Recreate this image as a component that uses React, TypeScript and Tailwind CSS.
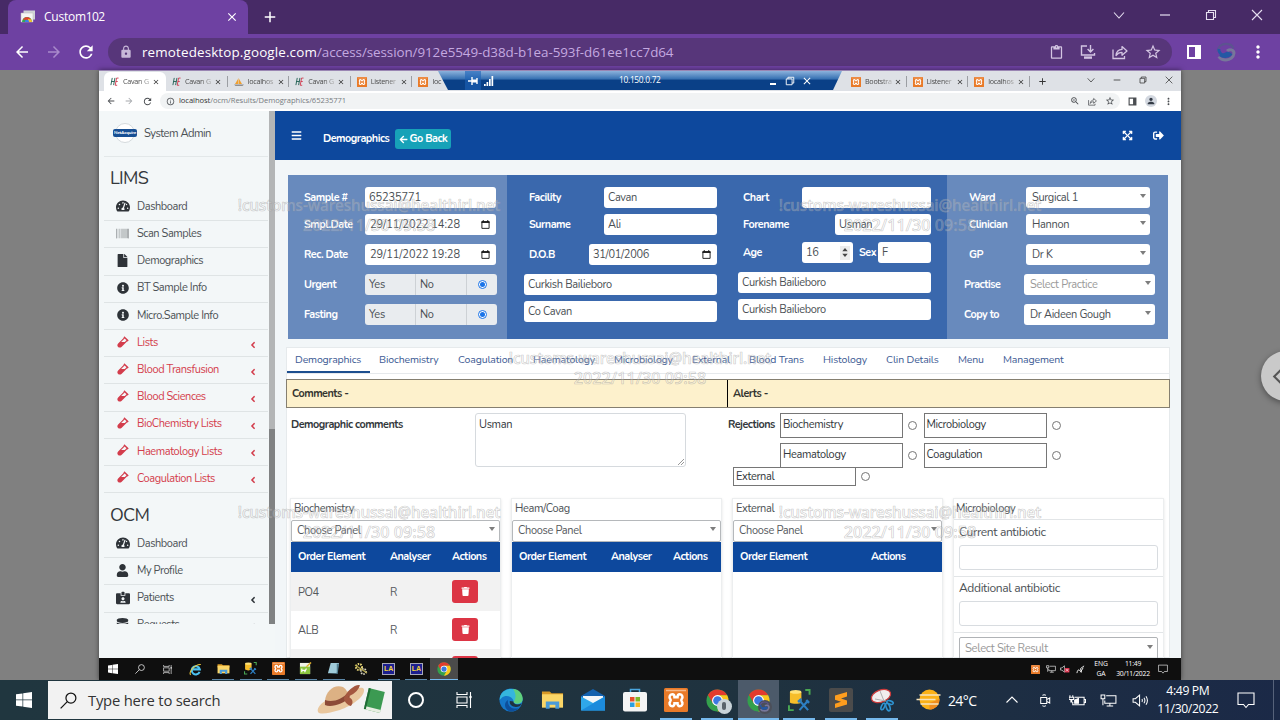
import React from "react";
import {
  FaTachometerAlt, FaBarcode, FaFile, FaInfoCircle, FaVial, FaAngleLeft, FaUser, FaIdCardAlt,
  FaDatabase, FaBars, FaArrowLeft, FaExpandArrowsAlt, FaSignOutAlt, FaTrash,
} from "react-icons/fa";
import {
  MdArrowBack, MdArrowForward, MdRefresh, MdLock, MdClose, MdAdd, MdStarBorder, MdOutlineContentPaste,
  MdOutlineInfo, MdZoomIn, MdMoreVert, MdPerson,
} from "react-icons/md";

type Cls = { className?: string };

/* ---------- drawings ---------- */

const Share = ({ className = "" }: Cls) => (
  <svg viewBox="0 0 16 16" className={className} fill="none" stroke="currentColor" strokeWidth="1.3">
    <path d="M1 5.5V14.5H12.5V12" />
    <path d="M4 11.5C4.4 7.5 6.5 5.6 10 5.4V2.6L15 7L10 11.2V8.4C7.4 8.4 5.6 9.3 4 11.5Z" strokeLinejoin="round" />
  </svg>
);

const Install = ({ className = "" }: Cls) => (
  <svg viewBox="0 0 16 16" className={className} fill="none" stroke="currentColor" strokeWidth="1.4">
    <path d="M7 2H1.5V11H14.5V9" />
    <path d="M10.5 1V7.5M7.6 5L10.5 8L13.4 5" />
    <path d="M4 13.6H12" strokeWidth="2.4" />
  </svg>
);

const SidePanel = ({ className = "" }: Cls) => (
  <svg viewBox="0 0 16 16" className={className} fill="currentColor">
    <path d="M1 1H15V15H1ZM3 3V13H9V3Z" fillRule="evenodd" />
  </svg>
);

const Restore = ({ className = "" }: Cls) => (
  <svg viewBox="0 0 12 12" className={className} fill="none" stroke="currentColor" strokeWidth="1.1">
    <path d="M1.5 3.5H8.5V10.5H1.5ZM3.5 3.5V1.5H10.5V8.5H8.5" />
  </svg>
);

const Cross = ({ className = "" }: Cls) => (
  <svg viewBox="0 0 12 12" className={className} fill="none" stroke="currentColor" strokeWidth="1.1">
    <path d="M1 1L11 11M11 1L1 11" />
  </svg>
);

const ChevronDown = ({ className = "" }: Cls) => (
  <svg viewBox="0 0 12 12" className={className} fill="none" stroke="currentColor" strokeWidth="1.1">
    <path d="M1 3.5L6 9L11 3.5" />
  </svg>
);

const Dash = ({ className = "" }: Cls) => (
  <svg viewBox="0 0 12 12" className={className} fill="none" stroke="currentColor" strokeWidth="1.2">
    <path d="M1 6H11" />
  </svg>
);

const RemoteDesktopLogo = ({ className = "" }: Cls) => (
  <svg viewBox="0 0 16 16" className={className}>
    <path d="M3.5 1.5H15V10.5H3.5Z" fill="#cfd2d6" />
    <path d="M1 4H13V13H1Z" fill="#f4f4f4" stroke="#b8b8b8" strokeWidth=".5" />
    <path d="M2 13A5 5 0 0 1 12 13Z" fill="#34a853" />
    <path d="M2.6 10.6A5 5 0 0 1 11.4 10.6L7 11Z" fill="#e2432f" />
    <path d="M8 10L11.4 10.6L12 13H8Z" fill="#f7c22b" />
    <path d="M4.8 13A2.2 2.2 0 0 1 9.2 13Z" fill="#3b7ded" />
  </svg>
);

const SwirlLogo = ({ className = "" }: Cls) => (
  <svg viewBox="0 0 20 20" className={className} fill="none">
    <path d="M1.800 9.500C1.800 4.500 6 1.800 10 1.800C13.500 1.800 16.500 3.800 17.500 6.500" stroke="#5c5390" strokeWidth="2.200" />
    <path d="M11 9C13.500 6.500 18 8 18 11C17.500 15.500 14 18 10 18C6.500 18 4 16.500 2.800 14.500" stroke="#77779a" strokeWidth="3" />
    <path d="M3 7C2.500 11.500 6.500 13.800 9.500 12C11.500 10.800 13 11 14.500 12.500C12 15 7 15.500 4 13" stroke="#2458a4" strokeWidth="2.800" />
  </svg>
);

const HseLogo = () => (
  <svg viewBox="0 0 10 10" className="size-[9px] shrink-0" fill="none">
    <path d="M2.500 1L1 9M5.500 1L4 9M1.500 5H5" stroke="#1d5e50" strokeWidth="1" />
    <path d="M9.500 1.200H7.300L5.800 9.200H8M6.500 5H8.600" stroke="#d0384d" strokeWidth="1" />
  </svg>
);

const XamppLogo = ({ className = "" }: Cls) => (
  <svg viewBox="0 0 24 24" className={className}>
    <rect width="24" height="24" rx="1.5" fill="#e97a28" />
    <path d="M2 2.500H22" stroke="#f6b98a" strokeWidth="1.500" />
    <path
      d="M8.200 6.300C5.500 6.300 4.800 9.500 6.300 11C7 11.800 7 12.700 6.300 13.500C4.800 15 5.500 18.200 8.200 18.200C10 18.200 10.500 17 10.500 15.300H13.500C13.500 17 14 18.200 15.800 18.200C18.500 18.200 19.200 15 17.700 13.500C17 12.700 17 11.800 17.700 11C19.200 9.500 18.500 6.300 15.800 6.300C14 6.300 13.500 7.500 13.500 9.200H10.500C10.500 7.500 10 6.300 8.200 6.300Z"
      fill="none" stroke="#fff" strokeWidth="2.500"
    />
  </svg>
);

const SailLogo = () => (
  <svg viewBox="0 0 10 8" className="h-[8px] w-[10px] shrink-0">
    <path d="M1 6L4 1V6ZM4.500 6V0L8 6Z" fill="#f0a030" />
    <path d="M0 6.500H10L8.500 8H1.500Z" fill="#8f8f8f" />
  </svg>
);

const Chrome = ({ className = "" }: Cls) => (
  <svg viewBox="0 0 24 24" className={className}>
    <circle cx="12" cy="12" r="11.500" fill="#34a04c" />
    <path d="M12 6.500H22.100A11.500 11.500 0 0 0 2.040 6.250L7.200 14.800Z" fill="#e33b2e" />
    <path d="M16.700 14.800L12 23.500A11.500 11.500 0 0 0 22.100 6.500H12Z" fill="#fbc71c" />
    <circle cx="12" cy="12" r="5.700" fill="#fff" />
    <circle cx="12" cy="12" r="4.500" fill="#3b78e0" />
  </svg>
);

const Windows = ({ className = "" }: Cls) => (
  <svg viewBox="0 0 16 16" className={className} fill="currentColor">
    <path d="M0 2.300L6.500 1.400V7.600H0ZM7.200 1.300L16 0V7.600H7.200ZM0 8.300H6.500V14.600L0 13.700ZM7.200 8.300H16V16L7.200 14.700Z" />
  </svg>
);

const Magnifier = ({ className = "" }: Cls) => (
  <svg viewBox="0 0 16 16" className={className} fill="none" stroke="currentColor" strokeWidth="1.150">
    <circle cx="10.300" cy="5.700" r="4.700" />
    <path d="M6.900 9.100L.6 15.400" />
  </svg>
);

const TaskView = ({ className = "" }: Cls) => (
  <svg viewBox="0 0 16 16" className={className} fill="none" stroke="currentColor" strokeWidth="1.100">
    <path d="M1 0V2.500H11V0M1 16V13.500H11V16M1 5H11V11H1ZM14.500 0V16" />
    <path d="M13.400 5H15.600" strokeWidth="2.200" />
  </svg>
);

const Folder = ({ className = "" }: Cls) => (
  <svg viewBox="0 0 24 22" className={className}>
    <path d="M1 2H9L11 4H23V8H1Z" fill="#d99a26" />
    <path d="M1 5H23V19H1Z" fill="#fbd667" />
    <path d="M5 20V12.500H19V20H15V16H9V20Z" fill="#4a9bd8" />
  </svg>
);

const DbTools = ({ className = "" }: Cls) => (
  <svg viewBox="0 0 24 24" className={className} fill="none">
    <path d="M2 3V14C5 16 11 16 14 14V3Z" fill="#f6bd2a" />
    <ellipse cx="8" cy="3" rx="6" ry="2" fill="#ffe27a" />
    <path d="M18 1H22.500V6M1 17V22H6" stroke="#4aa853" strokeWidth="2" />
    <path d="M12 12L21 22M21 12L12 22" stroke="#2d7fc4" strokeWidth="2.200" />
    <path d="M10.500 13.500L14 10.500M19 11.500L22 14.500" stroke="#2d7fc4" strokeWidth="2.600" />
  </svg>
);

const Edge = ({ className = "" }: Cls) => (
  <svg viewBox="0 0 24 24" className={className}>
    <circle cx="12" cy="12" r="11.500" fill="#1577c9" />
    <path d="M1 9C3 2 11-1 18 2.500C23 5.500 25 12 22 15C19 17 14.500 16 14.500 13.500C14.500 10 10 7 5 8.500C3 9 2 10.500 .6 12Z" fill="#35b6dd" />
    <path d="M14 1C21 1 25 8 23.300 13C21.500 17 14.500 16.200 14.500 13.500C17 11 17.500 6 14 1Z" fill="#5fd07d" />
    <path d="M9 12C8 18 13 22 20 20C17 23.500 12 24 9 22.500C5 20 5 14 9 12Z" fill="#0d4f9c" />
    <path d="M14.500 13.500C14 16 18 17.500 22.500 15.500L21 18C16 20.500 10 18 10.800 13Z" fill="#1f3340" />
  </svg>
);

const Explorer = ({ className = "" }: Cls) => (
  <svg viewBox="0 0 16 16" className={className} fill="none">
    <path d="M13 11A5 5 0 1 1 13.200 7.800H4.500" stroke="#4cc3f2" strokeWidth="2.600" />
    <path d="M2 14.500C-1 12 6 1.500 14.500 1.800" stroke="#f4cd3a" strokeWidth="1.300" />
  </svg>
);

const Mail = ({ className = "" }: Cls) => (
  <svg viewBox="0 0 24 22" className={className}>
    <path d="M0 7L12 0L24 7V10H0Z" fill="#1461ae" />
    <path d="M2 7H22V15H2Z" fill="#f3f6f8" />
    <path d="M0 7.500L12 14L24 7.500V21.500H0Z" fill="#2fa7ea" />
    <path d="M0 21.500L24 7.500V21.500Z" fill="#1c8bdc" />
  </svg>
);

const Store = ({ className = "" }: Cls) => (
  <svg viewBox="0 0 24 24" className={className}>
    <path d="M7.500 6V1.500H16.500V6" fill="none" stroke="#4aa7e0" strokeWidth="1.500" />
    <rect y="4" width="24" height="19.500" rx="2" fill="#f4f4f4" />
    <path d="M7 9H11.500V13.500H7Z" fill="#e8502c" />
    <path d="M12.500 9H17V13.500H12.500Z" fill="#7db928" />
    <path d="M7 14.500H11.500V19H7Z" fill="#2ba0e2" />
    <path d="M12.500 14.500H17V19H12.500Z" fill="#f8b820" />
  </svg>
);

const Sublime = ({ className = "" }: Cls) => (
  <svg viewBox="0 0 24 24" className={className}>
    <rect width="24" height="24" rx="2" fill="#4b4b4b" />
    <path d="M6 7.500L18 4V8.500L12 10.500L18 12.500V16.500L6 20V15.800L12 13.800L6 11.800Z" fill="#ff9d1e" />
  </svg>
);

const Snip = ({ className = "" }: Cls) => (
  <svg viewBox="0 0 24 24" className={className} fill="none">
    <ellipse cx="11" cy="8" rx="10" ry="6" transform="rotate(-20 11 8)" fill="#f1eded" stroke="#cc3b3b" strokeWidth="1.300" />
    <path d="M10 3L14 13M5 11L16 13" stroke="#b0b0b0" strokeWidth="1" />
    <ellipse cx="13" cy="18.500" rx="1.600" ry="3.500" transform="rotate(25 13 18.500)" stroke="#2f93d1" strokeWidth="1.600" />
    <ellipse cx="18" cy="19" rx="1.800" ry="4" transform="rotate(-20 18 19)" stroke="#2f93d1" strokeWidth="1.600" />
    <ellipse cx="20" cy="14.500" rx="1.700" ry="3.300" transform="rotate(-75 20 14.500)" stroke="#2f93d1" strokeWidth="1.600" />
  </svg>
);

const Notepad = ({ green = false }: { green?: boolean }) => (
  <svg viewBox="0 0 14 14" className="size-[13px]">
    {green ? (
      <>
        <path d="M1 1H12V13H1Z" fill="#f1f4e8" />
        <path d="M1 5H12V13H1Z" fill="#8cc63f" />
        <path d="M3 7V11M3 9H7M8 7L6 11" stroke="#fff" strokeWidth="1.300" />
        <path d="M8 5L13 .5" stroke="#e0b02c" strokeWidth="1.500" />
      </>
    ) : (
      <>
        <path d="M4 1H13L10.500 12H1Z" fill="#9fcbd9" />
        <path d="M10.500 2H13L11.500 13H3L10.500 12Z" fill="#4f7d90" />
      </>
    )}
  </svg>
);

const Gears = () => (
  <svg viewBox="0 0 14 14" className="size-[14px]" fill="none">
    <circle cx="5" cy="5" r="3" stroke="#e9d87a" strokeWidth="2" strokeDasharray="1.500 1" />
    <circle cx="9.500" cy="9.500" r="2.500" stroke="#d5d0bb" strokeWidth="1.800" strokeDasharray="1.500 1" />
    <path d="M1 3L13 11" stroke="#b7a94c" strokeWidth="1.200" />
  </svg>
);

const LabApp = () => (
  <span className="flex h-[12px] w-[13px] flex-col items-center border border-[#a8a8b8] bg-[#1c1f8e]">
    <span className="font-['Liberation_Sans',sans-serif] text-[7px] leading-[9px] font-bold text-[#f3d43b]">LA</span>
  </span>
);

const Monitor = ({ className = "" }: Cls) => (
  <svg viewBox="0 0 18 14" className={className} fill="none" stroke="currentColor" strokeWidth="1.100">
    <path d="M6.500 2H17V10H5V7M7 12.800H14M10.500 10V12.800" />
    <path d="M1 1H5V5H1ZM3 5V12" />
  </svg>
);

const Speaker = ({ className = "", muted = false }: Cls & { muted?: boolean }) => (
  <svg viewBox="0 0 18 14" className={className} fill="none" stroke="currentColor" strokeWidth="1.100">
    <path d="M1 5H3.500L8 1.200V12.800L3.500 9H1Z" />
    {muted ? (
      <>
        <rect x="8.500" y="5" width="8.500" height="8.500" rx="1" fill="#d9304a" stroke="none" />
        <path d="M10.500 7L15 11.500M15 7L10.500 11.500" stroke="#fff" />
      </>
    ) : (
      <path d="M10.500 5.500Q11.500 7 10.500 8.500M12.700 4Q14.800 7 12.700 10M14.900 2.400Q18 7 14.900 11.600" />
    )}
  </svg>
);

const Bubble = ({ className = "" }: Cls) => (
  <svg viewBox="0 0 18 18" className={className} fill="none" stroke="currentColor" strokeWidth="1.100">
    <path d="M1 2H17V13.500H11.500L9 16.500L6.500 13.500H1Z" />
  </svg>
);

const CalendarIcon = () => (
  <svg viewBox="0 0 10 10" className="mb-[2px] size-[9px] shrink-0" fill="none" stroke="#111">
    <path d="M1 2H9V9.300H1Z" strokeWidth="1" />
    <path d="M.5 2.300H9.500" strokeWidth="1.800" />
    <path d="M2.500 0V2M7.500 0V2" strokeWidth="1" />
  </svg>
);

const Caret = () => (
  <svg viewBox="0 0 6 4" className="mb-[5px] h-[4px] w-[6px] shrink-0">
    <path d="M0 0H6L3 4Z" fill="#7d7d7d" />
  </svg>
);

/* ---------- outer browser ---------- */

const OuterChrome = () => (
  <header className="shrink-0 font-['Segoe_UI','Open_Sans',sans-serif] text-white">
    <div className="flex h-[34px] items-center bg-[#472a66]">
      <div className="ml-2 flex h-full w-[240px] items-center rounded-t-lg bg-[#6e41a2] pr-[9px] pl-3">
        <RemoteDesktopLogo className="size-4" />
        <span className="ml-2 flex-1 text-[12px] tracking-[-0.600px]"><span className="tracking-[-0.250px]">Custom</span>102</span>
        <MdClose className="size-[14px]" />
      </div>
      <MdAdd className="ml-[13px] size-[18px]" />
      <div className="ml-auto flex items-center gap-[34px] pr-[17px] pb-[5px] text-[#e6dff0]">
        <ChevronDown className="size-3" />
        <Dash className="size-3" />
        <Restore className="size-3" />
        <Cross className="size-3" />
      </div>
    </div>
    <div className="flex h-[36px] items-center bg-[#6e41a2]">
      <MdArrowBack className="ml-[13px] size-[18px]" />
      <MdArrowForward className="ml-[14px] size-[18px] text-[#a98acb]" />
      <MdRefresh className="ml-[13px] size-[20px]" />
      <div className="ml-[12px] flex h-[28px] w-[1064px] items-center rounded-full bg-[#57367a] pr-[10px] pl-[11px]">
        <MdLock className="size-[14px] text-[#c7b8d8]" />
        <span className="ml-[9px] flex-1 text-[13.400px] text-[#c4a9e0]">
          <span className="tracking-[0.150px] text-white">remotedesktop.google.com</span><span className="tracking-[-0.070px]">/access/session/912e5549-d38d-b1ea-593f-d61ee1cc7d64</span>
        </span>
        <span className="flex items-center gap-4 text-[#d3c5e2]">
          <MdOutlineContentPaste className="size-[15px]" />
          <Install className="size-4" />
          <Share className="size-4" />
          <MdStarBorder className="size-[18px]" />
        </span>
      </div>
      <SidePanel className="ml-[14px] size-4" />
      <SwirlLogo className="ml-[14px] size-5" />
      <MdMoreVert className="ml-[12px] size-5" />
    </div>
  </header>
);

/* ---------- remote browser ---------- */

const TAB_ICONS = { hse: <HseLogo />, sail: <SailLogo />, xampp: <XamppLogo className="size-[10px] shrink-0" /> };

const RemoteTab = ({ icon, title, active = false, line = false }: { icon: keyof typeof TAB_ICONS; title: string; active?: boolean; line?: boolean }) => (
  <div className={active ? "flex h-[19px] w-[62px] items-center rounded-t-md bg-white pl-[6px]" : "flex h-[19px] w-[61.600px] items-center pl-[6px]"}>
    {TAB_ICONS[icon]}
    <span className="ml-[4px] w-[28px] bg-gradient-to-r from-[#444] from-55% to-[#ccc] bg-clip-text text-[7.200px] tracking-[-0.250px] whitespace-nowrap text-transparent">{title}</span>
    <MdClose className="ml-px size-[8px] shrink-0 text-[#333]" />
    {line && <span className="ml-auto h-[11px] w-px bg-[#9b9ea3]" />}
  </div>
);

const RemoteBrowser = () => (
  <div className="shrink-0 font-['Segoe_UI','Open_Sans',sans-serif]">
    <div className="relative flex h-5 items-end bg-[#dee1e6] pl-[5px]">
      <RemoteTab icon="hse" title="Cavan G" active />
      <RemoteTab icon="hse" title="Cavan G" line />
      <RemoteTab icon="sail" title="localhos" line />
      <RemoteTab icon="hse" title="Cavan G" line />
      <RemoteTab icon="xampp" title="Listener" line />
      <RemoteTab icon="xampp" title="loc" />
      <span className="w-[371px]" />
      <RemoteTab icon="xampp" title="Bootstra" line />
      <RemoteTab icon="xampp" title="Listener" line />
      <RemoteTab icon="xampp" title="localhos" line />
      <MdAdd className="mb-[4px] ml-[7px] size-[11px] text-[#333]" />
      <div className="mr-2 mb-[7px] ml-auto flex items-center gap-[18px] text-[#333]">
        <ChevronDown className="size-[8px]" />
        <Dash className="size-[8px]" />
        <Restore className="size-[8px]" />
        <Cross className="size-[8px]" />
      </div>
      <div className="absolute top-0 left-[339px] flex h-[19px] w-[404px] items-center bg-gradient-to-b from-[#8cb2dc] via-[#3a74b4] via-40% to-[#0a4087] to-50% text-white [clip-path:polygon(0_0,100%_0,395px_100%,10px_100%)]">
        <span className="ml-[27px] flex h-full w-[16px] items-center justify-center bg-[#1c63b8]/60">
          <svg viewBox="0 0 10 8" className="h-[8px] w-[10px]" fill="none" stroke="#fff">
            <path d="M0 4H4M4 0V8M9 1V7" strokeWidth="1.400" />
            <path d="M4 4H9" strokeWidth="3" />
          </svg>
        </span>
        <svg viewBox="0 0 10 10" className="ml-[3px] size-[10px]" fill="#fff">
          <path d="M0 8H1.700V10H0ZM2.500 6H4.200V10H2.500ZM5 3H6.700V10H5ZM7.500 0H9.200V10H7.500Z" />
        </svg>
        <span className="ml-[125px] w-[110px] text-[8.400px] tracking-[-0.300px]">10.150.0.72</span>
        <span className="mt-[7px] ml-[41px] h-[2px] w-[6px] bg-white" />
        <Restore className="ml-[9px] size-[10px]" />
        <MdClose className="ml-[6px] size-[12px]" />
      </div>
    </div>
    <div className="flex h-[20px] items-center bg-white pl-[7px] text-[#4a4d51]">
      <MdArrowBack className="size-[10px]" />
      <MdArrowForward className="ml-[8px] size-[10px] text-[#a5a8ac]" />
      <MdRefresh className="ml-[8px] size-[11px]" />
      <div className="ml-[7px] flex h-[16px] w-[960px] items-center rounded-full bg-[#f1f3f4] pr-[5px] pl-[6px]">
        <MdOutlineInfo className="size-[9px]" />
        <span className="ml-[4px] flex-1 text-[7.600px] tracking-[-0.060px] text-[#777b7f]">
          <span className="text-[#333]">localhost</span>/ocm/Results/Demographics/65235771
        </span>
        <MdZoomIn className="size-[10px]" />
        <Share className="ml-[8px] size-[9px]" />
        <MdStarBorder className="ml-[8px] size-[10px]" />
      </div>
      <SidePanel className="ml-[8px] size-[9px]" />
      <span className="ml-[8px] flex size-[12px] items-center justify-center rounded-full bg-[#d3d8e0]">
        <MdPerson className="size-[10px] text-[#333a45]" />
      </span>
      <MdMoreVert className="ml-[6px] size-[11px]" />
    </div>
  </div>
);

/* ---------- sidebar ---------- */

const Item = ({ icon, label, red = false, arrow = false }: { icon: React.ReactNode; label: string; red?: boolean; arrow?: boolean }) => (
  <li className={red ? "flex h-[27.200px] items-center border-b border-[#dfe4e5] text-[#d33d4c]" : "flex h-[27.200px] items-center border-b border-[#dfe4e5] text-[#4c5155]"}>
    <span className={red ? "flex w-[28px] justify-center pb-[3px] pl-[9px] text-[12px]" : "flex w-[28px] justify-center pb-[2px] pl-[9px] text-[13px] text-[#2e3338]"}>{icon}</span>
    <span className="ml-[5px] flex-1 text-[11px] tracking-[-0.430px]">{label}</span>
    {arrow && <FaAngleLeft className={red ? "mt-[3px] mr-[10px] size-[10px]" : "mt-[3px] mr-[10px] size-[10px] text-[#2e3338]"} />}
  </li>
);

const Sidebar = () => (
  <aside className="h-full w-[176px] shrink-0 bg-[#f3f7f8]">
    <div className="flex h-[513px]">
      <div className="h-full w-[169px] overflow-hidden pl-[5px]">
        <div className="flex h-[46px] items-center border-b border-[#e3e8e9] pl-[11px]">
          <span className="relative mb-px flex size-[20px] items-center justify-center rounded-full border border-[#d5dadd] bg-white">
            <span className="absolute flex h-[8px] w-[24px] items-center justify-center rounded-[2px] bg-[#174f94] text-[4.600px] font-bold tracking-[-0.200px] text-white">NetAcquire</span>
          </span>
          <span className="ml-[9px] pt-[2px] text-[11.200px] tracking-[-0.520px] text-[#4c5155]">System Admin</span>
        </div>
        <h2 className="h-[37px] pt-[8px] pl-[6px] text-[18px] leading-[27px] tracking-[-0.700px] text-[#33383c]">LIMS</h2>
        <ul>
          <Item icon={<FaTachometerAlt className="size-[14px]" />} label="Dashboard" />
          <Item icon={<FaBarcode className="text-[#8b8f92]" />} label="Scan Samples" />
          <Item icon={<FaFile />} label="Demographics" />
          <Item icon={<FaInfoCircle className="size-3" />} label="BT Sample Info" />
          <Item icon={<FaInfoCircle className="size-3" />} label="Micro.Sample Info" />
          <Item icon={<FaVial />} label="Lists" red arrow />
          <Item icon={<FaVial />} label="Blood Transfusion" red arrow />
          <Item icon={<FaVial />} label="Blood Sciences" red arrow />
          <Item icon={<FaVial />} label="BioChemistry Lists" red arrow />
          <Item icon={<FaVial />} label="Haematology Lists" red arrow />
          <Item icon={<FaVial />} label="Coagulation Lists" red arrow />
        </ul>
        <h2 className="h-[38px] pt-[9px] pl-[6px] text-[18px] leading-[27px] tracking-[-0.700px] text-[#33383c]">OCM</h2>
        <ul>
          <Item icon={<FaTachometerAlt className="size-[14px]" />} label="Dashboard" />
          <Item icon={<FaUser />} label="My Profile" />
          <Item icon={<FaIdCardAlt className="size-[14px]" />} label="Patients" arrow />
          <Item icon={<FaDatabase />} label="Requests" arrow />
        </ul>
      </div>
      <div className="ml-px flex w-[6px] flex-col justify-end bg-[#b3b5b6]">
        <div className="h-[195px] bg-[#808283]" />
      </div>
    </div>
  </aside>
);

/* ---------- sample form ---------- */

const FIELD = "flex h-[21px] items-center justify-between rounded-[3px] bg-white pt-[2px] text-[#4a4f54]";
const LABEL = "pt-[2px] text-[10.800px] font-bold tracking-[-0.480px] text-white";

const YesNo = () => (
  <div className="flex h-[21px] w-[132px] rounded-[3px] bg-[#e9ecef] text-[#4a4f54]">
    <span className="flex w-[51px] items-center border-r border-[#cdd1d5] pt-[2px] pl-1">Yes</span>
    <span className="flex w-[51px] items-center border-r border-[#cdd1d5] pt-[2px] pl-1">No</span>
    <span className="flex flex-1 items-center justify-center">
      <span className="flex size-[9px] items-center justify-center rounded-full border border-[#1a73e8] bg-white">
        <span className="size-[5px] rounded-full bg-[#1a73e8]" />
      </span>
    </span>
  </div>
);

const SampleForm = () => (
  <section className="ml-[13px] flex h-[164px] w-[880px] shrink-0 bg-[#3a68ad] text-[11px] tracking-[-0.330px]">
    <div className="w-[219px] bg-[#688abd] pt-[12px] pl-[16px]">
      <div className="flex items-center">
        <span className={`${LABEL} w-[61px]`}>Sample #</span>
        <div className={`${FIELD} w-[131px] px-1 tracking-[-0.100px]`}>65235771</div>
      </div>
      <div className="mt-[6px] flex items-center">
        <span className={`${LABEL} w-[61px]`}>Smpl.Date</span>
        <div className={`${FIELD} w-[131px] pr-[6px] pl-[5px] tracking-[-0.050px]`}>29/11/2022 14:28<CalendarIcon /></div>
      </div>
      <div className="mt-[9px] flex items-center">
        <span className={`${LABEL} w-[61px]`}>Rec. Date</span>
        <div className={`${FIELD} w-[131px] pr-[6px] pl-[5px] tracking-[-0.050px]`}>29/11/2022 19:28<CalendarIcon /></div>
      </div>
      <div className="mt-[9px] flex items-center">
        <span className={`${LABEL} w-[61px]`}>Urgent</span>
        <YesNo />
      </div>
      <div className="mt-[9px] flex items-center">
        <span className={`${LABEL} w-[61px]`}>Fasting</span>
        <YesNo />
      </div>
    </div>
    <div className="flex w-[210px] flex-col items-end pt-[12px]">
      <div className="flex items-center">
        <span className={`${LABEL} w-[75px]`}>Facility</span>
        <div className={`${FIELD} w-[113px] px-1`}>Cavan</div>
      </div>
      <div className="mt-[6px] flex items-center">
        <span className={`${LABEL} w-[75px]`}>Surname</span>
        <div className={`${FIELD} w-[113px] px-1`}>Ali</div>
      </div>
      <div className="mt-[9px] flex items-center">
        <span className={`${LABEL} w-[60px]`}>D.O.B</span>
        <div className={`${FIELD} w-[128px] pr-[6px] pl-1 tracking-[-0.300px]`}>31/01/2006<CalendarIcon /></div>
      </div>
      <div className={`${FIELD} mt-[9px] w-[193px] px-1`}>Curkish Bailieboro</div>
      <div className={`${FIELD} mt-[6px] w-[193px] px-1`}>Co Cavan</div>
    </div>
    <div className="flex w-[214px] flex-col items-end pt-[12px]">
      <div className="flex items-center">
        <span className={`${LABEL} w-[59px]`}>Chart</span>
        <div className={`${FIELD} w-[129px]`} />
      </div>
      <div className="mt-[6px] flex items-center">
        <span className={`${LABEL} w-[92px]`}>Forename</span>
        <div className={`${FIELD} w-[96px] px-1`}>Usman</div>
      </div>
      <div className="mt-[7px] flex items-center">
        <span className={`${LABEL} w-[59px]`}>Age</span>
        <div className={`${FIELD} w-[51px] pr-[3px] pl-1`}>
          16
          <span className="mb-[2px] flex h-[14px] w-[10px] items-center justify-center bg-[#ececec]">
            <svg viewBox="0 0 6 10" className="h-[9px] w-[6px]" fill="#444">
              <path d="M0 3.500H6L3 0ZM0 6.500H6L3 10Z" />
            </svg>
          </span>
        </div>
        <span className={`${LABEL} w-[25px] pl-[6px]`}>Sex</span>
        <div className={`${FIELD} w-[53px] px-1`}>F</div>
      </div>
      <div className={`${FIELD} mt-[9px] w-[193px] px-1`}>Curkish Bailieboro</div>
      <div className={`${FIELD} mt-[6px] w-[193px] px-1`}>Curkish Bailieboro</div>
    </div>
    <div className="ml-[16px] w-[221px] bg-[#688abd] pt-[12px] pl-[17px]">
      <div className="flex items-center pl-[5px]">
        <span className={`${LABEL} w-[57px]`}>Ward</span>
        <div className={`${FIELD} w-[124px] pr-1 pl-[6px]`}>Surgical 1<Caret /></div>
      </div>
      <div className="mt-[6px] flex items-center pl-[5px]">
        <span className={`${LABEL} w-[57px]`}>Clinician</span>
        <div className={`${FIELD} w-[124px] pr-1 pl-[6px]`}>Hannon<Caret /></div>
      </div>
      <div className="mt-[9px] flex items-center pl-[5px]">
        <span className={`${LABEL} w-[57px]`}>GP</span>
        <div className={`${FIELD} w-[124px] pr-1 pl-[6px]`}>Dr K<Caret /></div>
      </div>
      <div className="mt-[9px] flex items-center">
        <span className={`${LABEL} w-[60px]`}>Practise</span>
        <div className={`${FIELD} w-[131px] pr-1 pl-[6px]`}><span className="text-[#9a9a9a]">Select Practice</span><Caret /></div>
      </div>
      <div className="mt-[9px] flex items-center">
        <span className={`${LABEL} w-[60px]`}>Copy to</span>
        <div className={`${FIELD} w-[131px] pr-1 pl-[6px]`}>Dr Aideen Gough<Caret /></div>
      </div>
    </div>
  </section>
);

/* ---------- lower card ---------- */

const NAV = [
  ["Biochemistry", "w-[79px]"],
  ["Coagulation", "w-[75px]"],
  ["Haematology", "w-[81px]"],
  ["Microbiology", "w-[78px]"],
  ["External", "w-[57px]"],
  ["Blood Trans", "w-[74px]"],
  ["Histology", "w-[63px]"],
  ["Clin Details", "w-[72px]"],
  ["Menu", "w-[45px]"],
  ["Management", "w-[79px]"],
];

const BOLD = "text-[10.800px] font-bold tracking-[-0.500px]";

const Reject = ({ label, short = false }: { label: string; short?: boolean }) => (
  <div className="flex items-center">
    <div className={short ? "flex h-[19px] w-[123px] items-center border border-[#767676] pt-px pl-[2px]" : "flex h-[25px] w-[123px] items-center border border-[#767676] pl-[2px]"}>{label}</div>
    <span className="ml-[5px] size-[9px] rounded-full border border-[#767676] bg-white" />
  </div>
);

const PanelCard = ({ title, columns, rows = [] }: { title: string; columns: string[]; rows?: string[] }) => (
  <div className="h-[170px] w-[211px] shrink-0 border border-[#eceeef] shadow-sm">
    <div className="flex h-[21px] items-center pl-[3px] text-[#4c5155]">{title}</div>
    <div className="flex h-[22px] items-center justify-between rounded-[2px] border border-[#b5b8bb] pt-px pr-[4px] pl-[5px] text-[#55595d]">Choose Panel<Caret /></div>
    <div className={`${BOLD} flex h-[30px] items-center bg-[#0d489d] pt-px pl-[7px] text-white`}>
      <span className={columns.length === 3 ? "w-[92px]" : "w-[131px]"}>{columns[0]}</span>
      {columns.length === 3 && <span className="w-[62px]">{columns[1]}</span>}
      <span>{columns[columns.length - 1]}</span>
    </div>
    {rows.map((name, i) => (
      <div key={name} className={i % 2 ? "flex h-[38px] items-center bg-white pl-[7px] text-[#55595d]" : "flex h-[38.500px] items-center bg-[#f2f2f2] pl-[7px] text-[#55595d]"}>
        <span className="w-[92px] pt-[3px]">{name}</span>
        <span className="w-[62px] pt-[3px]">R</span>
        <span className="flex h-[23px] w-[26px] items-center justify-center rounded-[3px] bg-[#dc3545]">
          <FaTrash className="size-[9px] text-white" />
        </span>
      </div>
    ))}
  </div>
);

const LowerCard = () => (
  <section className="mt-[8px] ml-[11px] h-[311px] w-[884px] shrink-0 border border-[#e6eaec] bg-white text-[11px] tracking-[-0.350px] text-[#33383c]">
    <nav className="flex h-[26px] border-b border-[#e6e9ec] pb-px text-[10.500px] tracking-[-0.150px] text-[#3d5b94]">
      <span className="-mb-px flex w-[83px] items-center border-b-2 border-[#1d4f8f] pl-2">Demographics</span>
      {NAV.map(([name, width]) => (
        <span key={name} className={`${width} flex items-center pl-[9px] whitespace-nowrap`}>{name}</span>
      ))}
    </nav>
    <div className={`${BOLD} mt-[5px] -ml-px flex h-[29px] w-[884px] border border-[#857f70] bg-[#fdf1cc] pt-px text-[#33342f]`}>
      <span className="-mt-px flex w-[441px] items-center border-r border-black pt-px pl-[5px]">Comments -</span>
      <span className="flex items-center pl-[5px]">Alerts -</span>
    </div>
    <div className="flex h-[90px] pt-[5px] pl-[4px]">
      <span className={`${BOLD} w-[184px] pt-[4px]`}>Demographic comments</span>
      <div className="flex h-[54px] w-[211px] justify-between rounded-[3px] border border-[#d6dade] pt-[3px] pl-[3px]">
        Usman
        <svg viewBox="0 0 8 8" className="mr-px mb-px size-[6px] self-end" stroke="#777" fill="none">
          <path d="M0 8L8 0M4 8L8 4" />
        </svg>
      </div>
      <div className="ml-[42px] flex flex-col">
        <div className="flex">
          <span className={`${BOLD} w-[52px] pt-[4px]`}>Rejections</span>
          <div className="grid grid-cols-[143.500px_144px] gap-y-[5px]">
            <Reject label="Biochemistry" />
            <Reject label="Microbiology" />
            <Reject label="Heamatology" />
            <Reject label="Coagulation" />
          </div>
        </div>
        <div className="-mt-px pl-[5px]"><Reject label="External" short /></div>
      </div>
    </div>
    <div className="flex gap-[10px] pl-[3px]">
      <PanelCard title="Biochemistry" columns={["Order Element", "Analyser", "Actions"]} rows={["PO4", "ALB", "GLU"]} />
      <PanelCard title="Heam/Coag" columns={["Order Element", "Analyser", "Actions"]} />
      <PanelCard title="External" columns={["Order Element", "Actions"]} />
      <div className="h-[170px] w-[211px] shrink-0 border border-[#eceeef] text-[#4c5155] shadow-sm">
        <div className="flex h-[21px] items-center border-b border-[#e2e5e7] pl-[2px]">Microbiology</div>
        <div className="h-[56.500px] border-b border-[#e2e5e7] px-[5px] pt-[3px] text-[12px]">
          <div className="leading-[18px]">Current antibiotic</div>
          <div className="mt-[4px] h-[25px] rounded-[3px] border border-[#d8dce0]" />
        </div>
        <div className="h-[56.500px] border-b border-[#e2e5e7] px-[5px] pt-[2px] text-[12px]">
          <div className="leading-[18px]">Additional antibiotic</div>
          <div className="mt-[4px] h-[25px] rounded-[3px] border border-[#d8dce0]" />
        </div>
        <div className="px-[5px] pt-[4px]">
          <div className="flex h-[24px] items-center justify-between rounded-[2px] border border-[#b0b3b6] pt-px pr-[4px] pl-[5px] text-[11.300px] text-[#999]">Select Site Result<Caret /></div>
        </div>
      </div>
    </div>
  </section>
);

const Application = () => (
  <div className="flex h-[547px] shrink-0 overflow-hidden font-['Nunito','Lato',sans-serif]">
    <Sidebar />
    <main className="flex w-[906px] flex-col overflow-hidden bg-[#f2f6f8]">
      <div className={`${BOLD} flex h-[49px] shrink-0 items-center bg-[#0d489d] text-white`}>
        <FaBars className="mb-[1px] ml-[16px] size-[11px]" />
        <span className="mt-[7px] ml-[21px] w-[72px]">Demographics</span>
        <span className="mt-[7px] flex h-[20px] w-[56px] items-center justify-center gap-[2px] rounded-[3px] bg-[#17a2b8] pt-px"><FaArrowLeft className="mb-px size-[9px]" />Go Back</span>
        <FaExpandArrowsAlt className="mb-px ml-auto size-[11px]" />
        <FaSignOutAlt className="mr-[17px] mb-px ml-[20px] size-[11px]" />
      </div>
      <div className="h-[15px] shrink-0" />
      <SampleForm />
      <LowerCard />
    </main>
  </div>
);

/* ---------- task bars ---------- */

const Slot = ({ children, open = false, active = false }: { children?: React.ReactNode; open?: boolean; active?: boolean }) => (
  <span className={active ? "flex h-full w-[27.600px] items-center justify-center border-b border-[#76b9ed] bg-[#4b4b4b]" : "flex h-full w-[27.600px] flex-col items-center"}>
    {active ? children : <span className="flex flex-1 items-center">{children}</span>}
    {!active && open && <span className="h-px w-[22px] bg-[#5c87a8]" />}
  </span>
);

const RemoteTaskbar = () => (
  <div className="flex h-[22px] shrink-0 items-center bg-[#0f0f0f] font-['Segoe_UI','Open_Sans',sans-serif] text-white">
    <Slot><Windows className="size-[10px]" /></Slot>
    <Slot><Magnifier className="size-[10px]" /></Slot>
    <Slot><TaskView className="size-[9px]" /></Slot>
    <Slot><Explorer className="size-[13px]" /></Slot>
    <Slot open><Folder className="h-[12px] w-[13px]" /></Slot>
    <Slot open><DbTools className="size-[13px]" /></Slot>
    <Slot open><XamppLogo className="size-[13px]" /></Slot>
    <Slot open><Notepad green /></Slot>
    <Slot open><Notepad /></Slot>
    <Slot><Gears /></Slot>
    <Slot open><LabApp /></Slot>
    <Slot open><LabApp /></Slot>
    <Slot active><Chrome className="size-[14px]" /></Slot>
    <div className="ml-auto flex items-center pr-[13px]">
      <XamppLogo className="mr-[2px] size-[9px]" />
      <Monitor className="ml-[4px] h-[8px] w-[10px]" />
      <Speaker muted className="ml-[4px] h-[8px] w-[10px]" />
      <svg viewBox="0 0 10 10" className="ml-[6px] size-[9px]" fill="none" stroke="#fff"><path d="M1 9Q2 4 4 6T6 8T5 4L9 1M8 3L5 8" /></svg>
      <div className="ml-[6px] w-[20px] text-center text-[6.800px] leading-[10px] tracking-[-0.100px]">ENG<br />GA</div>
      <div className="ml-[3px] w-[38px] text-center text-[6.800px] leading-[10px] tracking-[-0.250px] whitespace-nowrap">11:49<br />30/11/2022</div>
      <Bubble className="ml-[6px] size-[10px]" />
    </div>
  </div>
);

const BigSlot = ({ children, open = false, active = false }: { children?: React.ReactNode; open?: boolean; active?: boolean }) => (
  <span className={active ? "flex h-full w-[41.200px] shrink-0 flex-col items-center bg-[#4c5a6a]" : "flex h-full w-[41.200px] shrink-0 flex-col items-center"}>
    <span className="flex flex-1 items-center pt-[2px]">{children}</span>
    <span className={open ? (active ? "h-[2px] w-full bg-[#76b9ed]" : "h-[2px] w-[32px] bg-[#76b9ed]") : "h-[2px] w-0"} />
  </span>
);

const Taskbar = () => (
  <footer className="flex h-[40px] shrink-0 items-center bg-gradient-to-r from-[#20363f] via-[#1f323f] via-60% to-[#1b2947] font-['Segoe_UI','Open_Sans',sans-serif] text-white">
    <span className="flex w-[48px] shrink-0 justify-center"><Windows className="size-4" /></span>
    <div className="flex h-[38px] w-[344px] shrink-0 items-center bg-[#f2f2f2] text-[#333]">
      <Magnifier className="ml-[12px] size-[17px] text-[#111]" />
      <span className="ml-[11px] w-[229px] pt-px text-[14.800px] tracking-[-0.200px]">Type here to search</span>
      <svg viewBox="0 0 76 34" className="h-[34px] w-[76px]">
        <path d="M2 29C0 24 8 17 20 13C32 8 46 2 48 6C50 13 36 23 24 27C14 30 4 32 2 29Z" fill="#e9c79e" />
        <path d="M9 18C10 8 18 1 27 4C31 6 32 11 32 14C27 20 14 23 9 18Z" fill="#dcb184" />
        <path d="M9 17C17 20 26 16 32 10L34 14C28 21 15 25 9 22Z" fill="#8c4a37" />
        <path d="M28 15C31 8 39 1 44 2C43 8 36 12 32 14C37 15 38 20 35 23C31 22 28 18 28 15Z" fill="#a4573f" />
        <path d="M53 5L69 9L64 30L48 26Z" fill="#3c9a52" />
        <path d="M48 26L64 30L65 27L49 23Z" fill="#e9efe2" />
        <path d="M53 5L55 5.500L50 26L48 26Z" fill="#1f6b35" />
      </svg>
    </div>
    <span className="flex w-[48px] shrink-0 justify-center"><span className="size-[16px] rounded-full border-[2.500px] border-white" /></span>
    <span className="flex w-[50.500px] shrink-0 justify-center pr-[3px]"><TaskView className="size-[16px]" /></span>
    <BigSlot><Edge className="size-6" /></BigSlot>
    <BigSlot><Folder className="h-[22px] w-[23px]" /></BigSlot>
    <BigSlot><Mail className="h-[22px] w-6" /></BigSlot>
    <BigSlot><Store className="size-6" /></BigSlot>
    <BigSlot open><XamppLogo className="size-6" /></BigSlot>
    <BigSlot open>
      <span className="relative">
        <Chrome className="size-[23px]" />
        <span className="absolute -right-[3px] -bottom-[2px] flex size-[15px] items-center justify-center rounded-full bg-[#c9d3d8]"><span className="h-[8px] w-[4px] rounded-full bg-[#59636a]" /></span>
      </span>
    </BigSlot>
    <BigSlot open active>
      <span className="relative">
        <Chrome className="size-[23px]" />
        <span className="absolute -right-[2px] -bottom-[2px] flex size-[14px] items-center justify-center rounded-full bg-[#4b4f59]"><SwirlLogo className="size-[11px]" /></span>
      </span>
    </BigSlot>
    <BigSlot open><DbTools className="size-[23px]" /></BigSlot>
    <BigSlot open><Sublime className="size-6" /></BigSlot>
    <BigSlot open><Snip className="size-6" /></BigSlot>
    <svg viewBox="0 0 24 22" className="ml-[13.500px] h-[22px] w-[25px] shrink-0">
      <circle cx="13" cy="10.500" r="10" fill="#fbb117" />
      <path d="M13 20.500A10 10 0 0 0 23 10L13 14Z" fill="#f08c1e" />
      <path d="M3 6H24M0 10.500H19M4 15H22" stroke="#f6e3bd" strokeWidth="1.600" />
    </svg>
    <span className="ml-[7px] w-[50px] shrink-0 text-[14px] tracking-[-0.550px]">24°C</span>
    <svg viewBox="0 0 12 12" className="ml-[8px] size-[12px] shrink-0" fill="none" stroke="#fff" strokeWidth="1.100"><path d="M.5 8.500L6 3L11.500 8.500" /></svg>
    <svg viewBox="0 0 14 16" className="ml-[21px] h-[15px] w-[12px] shrink-0" fill="none" stroke="#fff" strokeWidth="1.200"><path d="M2 4.500H9V11.500H2ZM9 7L12.500 5V11L9 9M4 2Q6 .5 8 2M4 14Q6 15.500 8 14" /></svg>
    <svg viewBox="0 0 18 12" className="ml-[18px] h-[12px] w-[17px] shrink-0" fill="none" stroke="#fff" strokeWidth="1.100"><path d="M6 3H16V11H4V8M16 5.500H17.500V8.500H16M1 1V3M4 1V3M0 3H5V5.500H3V8H2V5.500H0Z" /><path d="M6 9.500V6L10 4.500V9.500Z" fill="#fff" /></svg>
    <Monitor className="ml-[14px] h-[13px] w-[17px] shrink-0" />
    <Speaker className="ml-[15px] h-[13px] w-[17px] shrink-0" />
    <div className="ml-[5px] w-[68px] shrink-0 text-center text-[12.200px] leading-[18px] tracking-[-0.350px] whitespace-nowrap">4:49 PM<br />11/30/2022</div>
    <Bubble className="ml-[15px] size-[18px] shrink-0" />
    <span className="ml-[18px] h-full w-px bg-[#56627a]" />
  </footer>
);

/* ---------- watermark ---------- */

const Watermark = ({ place }: { place: string }) => (
  <div className={`pointer-events-none absolute ${place} flex w-[280px] flex-col items-center font-['Open_Sans',sans-serif] leading-[19.500px] font-semibold whitespace-nowrap text-white/20 [-webkit-text-stroke:0.700px_rgba(150,150,150,0.480)]`}>
    <span className="text-[15.300px] tracking-[-0.170px]">!customs-wareshussai@healthirl.net</span>
    <span className="text-[16.200px]">2022/11/30 09:58</span>
  </div>
);

export default function App() {
  return (
    <div className="relative flex h-[720px] w-[1280px] flex-col overflow-hidden bg-[#808080]">
      <OuterChrome />
      <div className="flex h-[610px] shrink-0 pl-[99px]">
        <div className="flex w-[1082px] shrink-0 flex-col border-t border-[#9a86b3] shadow-[0_0_5px_rgba(0,0,0,0.5)]">
          <RemoteBrowser />
          <Application />
          <RemoteTaskbar />
        </div>
      </div>
      <Taskbar />
      <div className="absolute top-[351px] left-[1261px] flex size-[50px] items-center rounded-full bg-[#c9c9c9] pl-[11px] shadow-[0_2px_6px_rgba(0,0,0,0.4)]">
        <svg viewBox="0 0 10 16" className="h-[15px] w-[10px]" fill="none" stroke="#555" strokeWidth="2.200"><path d="M9 1L2 8L9 15" /></svg>
      </div>
      <Watermark place="top-[196px] left-[229px]" />
      <Watermark place="top-[349px] left-[500px]" />
      <Watermark place="top-[196px] left-[770px]" />
      <Watermark place="top-[503px] left-[229px]" />
      <Watermark place="top-[503px] left-[770px]" />
    </div>
  );
}
